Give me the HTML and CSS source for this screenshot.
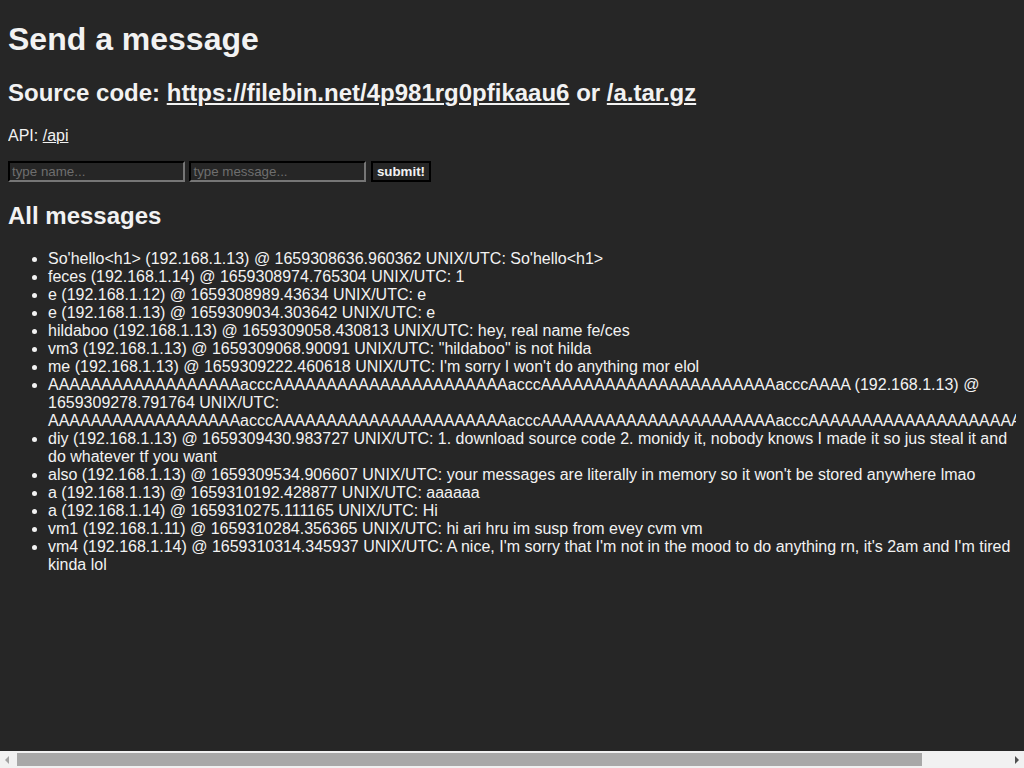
FILE: index.html
```html
<!DOCTYPE html>
<html>
<head>
    <title>Send a message</title>
    <meta charset="utf-8" />
    <link rel="stylesheet" href="styles.css">
</head>
<body>
    <h1>Send a message</h1>
    <h2>Source code: <a href="#">https://filebin.net/4p981rg0pfikaau6</a> or <a href="#">/a.tar.gz</a></h2>
    <p>API: <a href="#">/api</a></p>
    <form class="send-form" action="/send" method="post">
        <input type="text" name="name" placeholder="type name..." />
        <input type="text" name="message" placeholder="type message..." />
        <input type="submit" value="submit!" />
    </form>
    <h2>All messages</h2>
    <ul class="messages">
        <li>So'hello&lt;h1&gt; (192.168.1.13) @ 1659308636.960362 UNIX/UTC: So'hello&lt;h1&gt;</li>
        <li>feces (192.168.1.14) @ 1659308974.765304 UNIX/UTC: 1</li>
        <li>e (192.168.1.12) @ 1659308989.43634 UNIX/UTC: e</li>
        <li>e (192.168.1.13) @ 1659309034.303642 UNIX/UTC: e</li>
        <li>hildaboo (192.168.1.13) @ 1659309058.430813 UNIX/UTC: hey, real name fe/ces</li>
        <li>vm3 (192.168.1.13) @ 1659309068.90091 UNIX/UTC: "hildaboo" is not hilda</li>
        <li>me (192.168.1.13) @ 1659309222.460618 UNIX/UTC: I'm sorry I won't do anything mor elol</li>
        <li>AAAAAAAAAAAAAAAAAAacccAAAAAAAAAAAAAAAAAAAAAAacccAAAAAAAAAAAAAAAAAAAAAAacccAAAA (192.168.1.13) @ 1659309278.791764 UNIX/UTC: AAAAAAAAAAAAAAAAAAacccAAAAAAAAAAAAAAAAAAAAAAacccAAAAAAAAAAAAAAAAAAAAAAacccAAAAAAAAAAAAAAAAAAAAAAAAAAAAA</li>
        <li>diy (192.168.1.13) @ 1659309430.983727 UNIX/UTC: 1. download source code 2. monidy it, nobody knows I made it so jus steal it and do whatever tf you want</li>
        <li>also (192.168.1.13) @ 1659309534.906607 UNIX/UTC: your messages are literally in memory so it won't be stored anywhere lmao</li>
        <li>a (192.168.1.13) @ 1659310192.428877 UNIX/UTC: aaaaaa</li>
        <li>a (192.168.1.14) @ 1659310275.111165 UNIX/UTC: Hi</li>
        <li>vm1 (192.168.1.11) @ 1659310284.356365 UNIX/UTC: hi ari hru im susp from evey cvm vm</li>
        <li>vm4 (192.168.1.14) @ 1659310314.345937 UNIX/UTC: A nice, I'm sorry that I'm not in the mood to do anything rn, it's 2am and I'm tired kinda lol</li>
    </ul>
    <!-- horizontal scrollbar as the browser draws it -->
    <div class="fake-scrollbar">
        <span class="arrow arrow-left"></span>
        <span class="thumb"></span>
        <span class="arrow arrow-right"></span>
    </div>
</body>
</html>
```

FILE: styles.css
```css
html{
    background:#262626;
}
body{
    color:#f2f2f2;
    font-family:"Liberation Sans", Arial, sans-serif;
}
h1{
    margin-top:13px;
}
a{
    color:#f2f2f2;
}
.send-form input[type=text]{
    background:#262626;
    color:#f2f2f2;
    border:2px inset #767676;
    border-top-color:#1a1a1a;
    border-left-color:#1a1a1a;
    padding:1px 2px;
    width:169px;
    font-family:"Liberation Sans", Arial, sans-serif;
    font-size:13.33px;
}
.send-form input::placeholder{
    color:#6e6e6e;
}
.send-form input[type=submit]{
    background:#262626;
    color:#f2f2f2;
    border:2px solid #000;
    padding:1px 4px;
    font-family:"Liberation Sans", Arial, sans-serif;
    font-size:13.33px;
    font-weight:bold;
}
.fake-scrollbar{
    position:fixed;
    left:0;
    bottom:0;
    width:1024px;
    height:17px;
    background:#f1f1f1;
    display:flex;
    align-items:center;
}
.fake-scrollbar .thumb{
    width:905px;
    height:13px;
    background:#a8a8a8;
}
.fake-scrollbar .arrow{
    width:17px;
    height:17px;
    position:relative;
}
.fake-scrollbar .arrow:after{
    content:"";
    position:absolute;
    top:5px;
    border-top:4px solid transparent;
    border-bottom:4px solid transparent;
}
.fake-scrollbar .arrow-left:after{
    left:5px;
    border-right:4px solid #a3a3a3;
}
.fake-scrollbar .arrow-right{
    margin-left:auto;
}
.fake-scrollbar .arrow-right:after{
    left:8px;
    border-left:4px solid #505050;
}
```
